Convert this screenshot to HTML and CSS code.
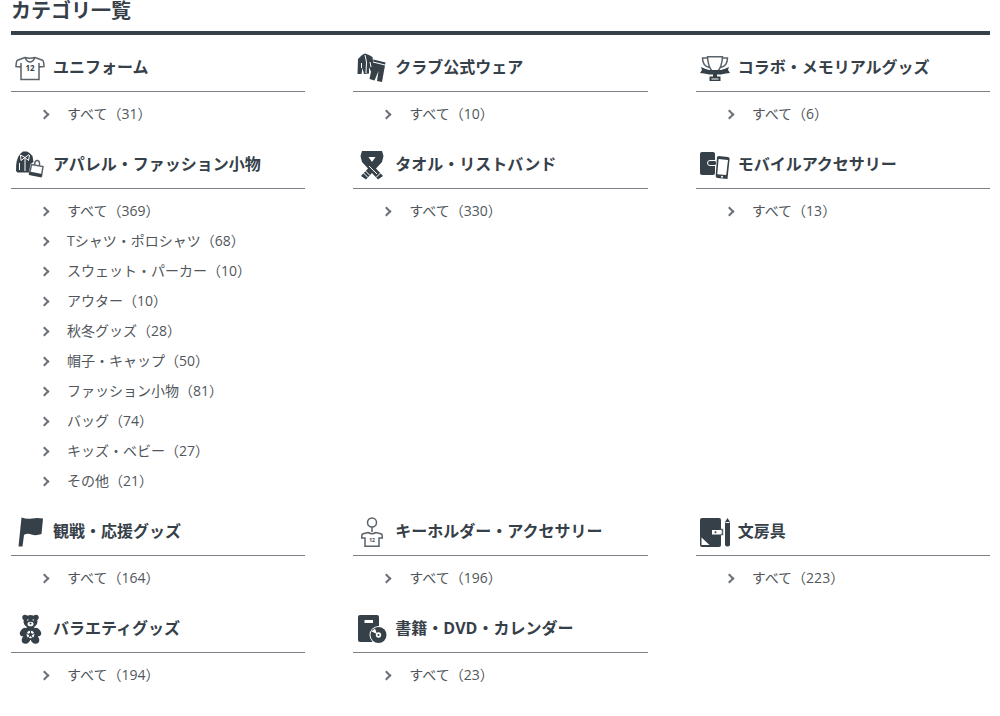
FILE: index.html
```html
<!DOCTYPE html>
<html lang="ja">
<head>
  <meta charset="UTF-8" />
  <meta name="viewport" content="width=device-width, initial-scale=1.0" />
  <title>カテゴリ一覧</title>
  <link rel="stylesheet" href="styles.css">
</head>
<body>
  <main class="container">
    <h1>カテゴリ一覧</h1>
    <div class="category-list">
      <section class="category">
        <h2>
          <svg class="icon" viewBox="0 0 30 30" aria-hidden="true">
            <path class="line" d="M10 4.500 2.500 7.200Q1.200 8 1 13.600L6 14V26.500H24V14L29 13.600Q28.800 8 27.500 7.200L20 4.500Q15 6 10 4.500ZM10 4.500Q12 9 15 9T20 4.500M6 14V10M24 14V10" />
            <text x="15" y="18">12</text>
          </svg>
          ユニフォーム
        </h2>
        <ul>
          <li><a href="#">すべて（31）</a></li>
        </ul>
      </section>

      <section class="category">
        <h2>
          <svg class="icon" viewBox="0 0 30 30" aria-hidden="true">
            <path d="M5 2 8 .5 12 2 15.500 4 17.500 19 14.500 20 12 14 12 20.500 7 21 5.500 15 4.500 21H.5L1 6Z" />
            <path d="M16.500 6.500 28.500 9.500 25 29 20 28 21.500 18 17.500 27.500 12.500 26Z" />
            <path class="cut" d="M8 2 9.500 9 9 20M4.500 10V15M13 9 14 14M16 9 28 12" />
          </svg>
          クラブ公式ウェア
        </h2>
        <ul>
          <li><a href="#">すべて（10）</a></li>
        </ul>
      </section>

      <section class="category">
        <h2>
          <svg class="icon" viewBox="0 0 30 30" aria-hidden="true">
            <path class="line" d="M7.500 3.700H22.500Q22 13 18 18H12Q8 13 7.500 3.700ZM7 5H2.500Q2.500 13 9.500 14.500M23 5H27.500Q27.500 13 20.500 14.500" />
            <path d="M1 14Q5 16 9 17H21Q25 16 29 14L28 17 30 20Q26 20 21 21.500H9Q4 20 0 20L2 17Z" />
            <path d="M13 19H17V23.500H20.500V28H9.500V23.500H13Z" />
            <path class="cut" d="M11.500 26H18.500" />
          </svg>
          コラボ・メモリアルグッズ
        </h2>
        <ul>
          <li><a href="#">すべて（6）</a></li>
        </ul>
      </section>

      <section class="category">
        <h2>
          <svg class="icon" viewBox="0 0 30 30" aria-hidden="true">
            <path d="M5.500 3.500 8 1.500H12L14.500 3 17.500 6 18.500 12 15.500 14 14 22.500H2.500L1 21Q.5 9 5.500 3.500Z" />
            <path class="cut" d="M5.500 5 10 7.500 14 4.500M5.500 5 6 10.500 10 7.500 13.500 10.500 14.500 5M10 8V21M4.500 13V20" />
            <path class="line" d="M16.500 14.500 28 16.500 26.500 26 14.500 24ZM19.500 14.500Q20 10 22.500 10.500T24.500 15.500" />
            <path d="M14.500 21.500 27 24 26.500 27.500 14 25Z" />
          </svg>
          アパレル・ファッション小物
        </h2>
        <ul>
          <li><a href="#">すべて（369）</a></li>
          <li><a href="#">Tシャツ・ポロシャツ（68）</a></li>
          <li><a href="#">スウェット・パーカー（10）</a></li>
          <li><a href="#">アウター（10）</a></li>
          <li><a href="#">秋冬グッズ（28）</a></li>
          <li><a href="#">帽子・キャップ（50）</a></li>
          <li><a href="#">ファッション小物（81）</a></li>
          <li><a href="#">バッグ（74）</a></li>
          <li><a href="#">キッズ・ベビー（27）</a></li>
          <li><a href="#">その他（21）</a></li>
        </ul>
      </section>

      <section class="category">
        <h2>
          <svg class="icon" viewBox="0 0 30 30" aria-hidden="true">
            <path d="M5 1H25L26.500 6 25 12 19 18.500 26 26 21 29.500 15 23 9 29.500 4 26 11 18.500 5 12 3.500 6Z" />
            <path class="hole" d="M11.500 7H18.500L15 12Z" />
            <path class="cut" d="M12 16 20 24M6.500 23 11 27.500M8.500 21 13 25.500M23.500 23 19 27.500" />
          </svg>
          タオル・リストバンド
        </h2>
        <ul>
          <li><a href="#">すべて（330）</a></li>
        </ul>
      </section>

      <section class="category">
        <h2>
          <svg class="icon" viewBox="0 0 30 30" aria-hidden="true">
            <rect y="2" width="15" height="23" rx="2" />
            <path class="cut" d="M15 10.500H10Q7.500 10.500 7.500 13T10 15.500H15" />
            <path d="M10 11.500H16V14.500H10Q8.500 13 10 11.500Z" />
            <path d="M18.500 6 28 7Q29.800 7.500 29.600 9L27.500 29 17.500 28Q15.500 27.500 15.700 26L17 7Z" />
            <path class="hole" d="M18.600 9 28 10 26.200 25 17.300 24.200Z" />
            <circle class="hole" cx="22" cy="26.700" r="1" />
          </svg>
          モバイルアクセサリー
        </h2>
        <ul>
          <li><a href="#">すべて（13）</a></li>
        </ul>
      </section>

      <section class="category">
        <h2>
          <svg class="icon" viewBox="0 0 30 30" aria-hidden="true">
            <path d="M6.500 .5Q12 2.500 17 1.500T28 1.500L26.500 17Q21 19 16.500 17.500T9 18L7.500 29.500H3.500Z" />
          </svg>
          観戦・応援グッズ
        </h2>
        <ul>
          <li><a href="#">すべて（164）</a></li>
        </ul>
      </section>

      <section class="category">
        <h2>
          <svg class="icon" viewBox="0 0 30 30" aria-hidden="true">
            <circle class="line" cx="15" cy="5.500" r="4.500" />
            <path class="line" d="M15 10V15M11 15.500 5.500 17Q4.700 17.500 4.700 21H8V29.300H22V21H25.300Q25.300 17.500 24.500 17L19 15.500Q15 18 11 15.500Z" />
            <text class="small" x="15" y="25">12</text>
          </svg>
          キーホルダー・アクセサリー
        </h2>
        <ul>
          <li><a href="#">すべて（196）</a></li>
        </ul>
      </section>

      <section class="category">
        <h2>
          <svg class="icon" viewBox="0 0 30 30" aria-hidden="true">
            <rect y="1" width="21" height="29" rx="2" />
            <path class="hole" d="M1.500 20.500 9.500 28H1.500ZM12 13H22.500V17.500H12Z" />
            <path class="line" d="M21 12.500H22.500V17.500H21" />
            <circle cx="15.500" cy="15.300" r="1" />
            <path d="M25 5 27.500 1 30 5V28Q29.500 29.500 27.500 29.500T25 28Z" />
            <path class="cut" d="M25.500 5.500H29.500" />
          </svg>
          文房具
        </h2>
        <ul>
          <li><a href="#">すべて（223）</a></li>
        </ul>
      </section>

      <section class="category">
        <h2>
          <svg class="icon" viewBox="0 0 30 30" aria-hidden="true">
            <circle cx="10" cy="3.500" r="2.700" />
            <circle cx="21" cy="3.500" r="2.700" />
            <ellipse cx="15.500" cy="7.500" rx="7" ry="6.500" />
            <ellipse cx="15.500" cy="20" rx="8" ry="7.500" />
            <ellipse cx="8.500" cy="18" rx="3" ry="4.500" transform="rotate(35 8.500 18)" />
            <ellipse cx="22.500" cy="18" rx="3" ry="4.500" transform="rotate(-35 22.500 18)" />
            <circle cx="10.500" cy="26" r="3.800" />
            <circle cx="20.500" cy="26" r="3.800" />
            <ellipse class="hole" cx="15.500" cy="10" rx="3" ry="2.300" />
            <circle cx="15.500" cy="9.500" r="1" />
            <circle class="hole" cx="15.500" cy="20.500" r="3.800" />
            <path d="M15.500 18.500 17.500 20 16.700 22.300H14.300L13.500 20Z" />
            <path class="thin" d="M15.500 16.500V19M12 19.500 14 20.500M19 19.500 17 20.500M13.500 24 14.500 22M17.500 24 16.500 22" />
            <path class="cut" d="M12 6H13.500M17.500 6H19M15.500 26V30" />
          </svg>
          バラエティグッズ
        </h2>
        <ul>
          <li><a href="#">すべて（194）</a></li>
        </ul>
      </section>

      <section class="category">
        <h2>
          <svg class="icon" viewBox="0 0 30 30" aria-hidden="true">
            <rect x="1" y="1" width="21" height="27" rx="2" />
            <path class="hole" d="M7.500 6H16V9H7.500Z" />
            <circle class="hole" cx="21.500" cy="21" r="9" />
            <circle cx="21.500" cy="21" r="8" />
            <circle class="hole" cx="21.500" cy="21" r="2.700" />
            <path class="hole" d="M20 20 14.500 17.500 18 14.500Z" />
            <circle cx="21.500" cy="21" r="1" />
          </svg>
          書籍・DVD・カレンダー
        </h2>
        <ul>
          <li><a href="#">すべて（23）</a></li>
        </ul>
      </section>
    </div>
  </main>
</body>
</html>
```
FILE: styles.css
```css
body {
  margin: 0;
  background: #fff;
  color: #364048;
  font-family: "Open Sans", "Noto Sans CJK JP", sans-serif;
}
.container {
  padding: 0 10px 0 11px;
}
h1 {
  margin: 0;
  padding-bottom: 9px;
  border-bottom: 4px solid #364048;
  font-size: 20px;
  line-height: 22px;
}
.category-list {
  display: grid;
  grid-template-columns: repeat(3, 1fr);
  gap: 21px 48px;
  padding-top: 18px;
}
h2 {
  display: flex;
  align-items: flex-start;
  gap: 8px;
  margin: 0;
  padding: 0 0 8px 4px;
  border-bottom: 1px solid #7b8186;
  font-size: 16px;
  line-height: 28px;
}
ul {
  margin: 0;
  padding: 7px 0 0;
  list-style: none;
}
li {
  display: flex;
  align-items: center;
  gap: 19px;
  padding-left: 30px;
  font-size: 14px;
  line-height: 30px;
}
li::before {
  content: "";
  width: 5px;
  height: 5px;
  border-top: 2px solid #6b7176;
  border-right: 2px solid #6b7176;
  transform: rotate(45deg);
}
a {
  color: #50565b;
  text-decoration: none;
}
a:hover {
  text-decoration: underline;
}

/* icons */
.icon {
  width: 30px;
  height: 30px;
  flex: none;
  fill: #364048;
}
.icon .line {
  fill: none;
  stroke: #5b636a;
  stroke-width: 1.5;
}
.icon .thin {
  stroke: #364048;
  stroke-width: 1;
}
.icon .cut {
  fill: none;
  stroke: #fff;
  stroke-width: 1;
}
.icon .hole {
  fill: #fff;
}
.icon text {
  font-size: 8px;
  font-weight: bold;
  text-anchor: middle;
}
.icon .small {
  font-size: 5px;
}
```
